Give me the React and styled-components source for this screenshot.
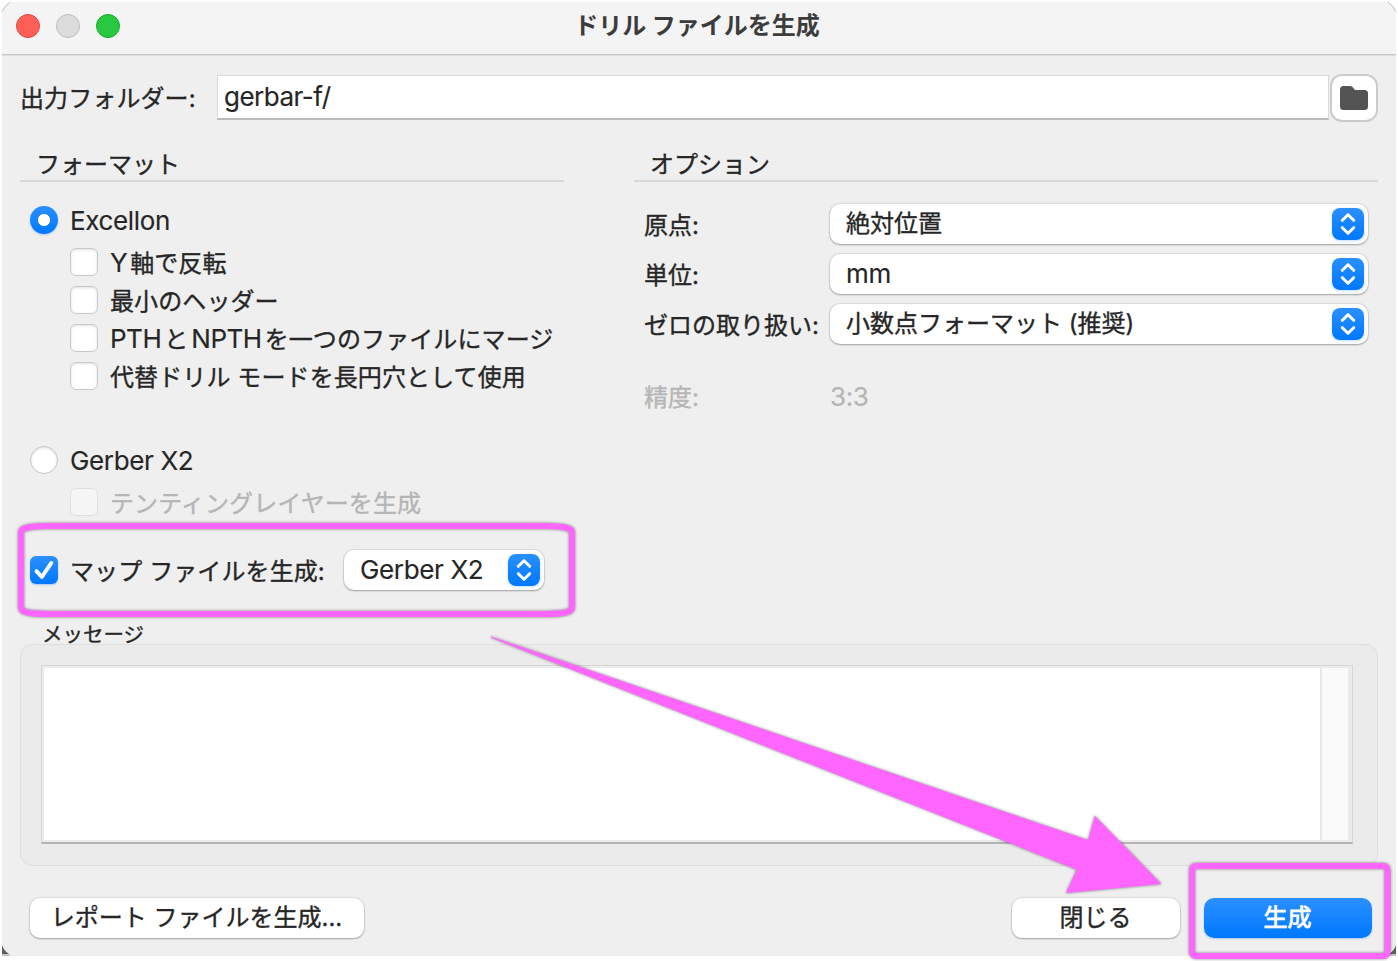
import React, { useState } from "react"
import styled, { createGlobalStyle, css } from "styled-components";

const GlobalStyle = createGlobalStyle`
*{
  box-sizing: border-box;
}
body{
  margin: 0;
  background: #fff;
  color: #262626;
  font-family: Inter, "Noto Sans CJK JP", sans-serif;
  font-size: 24px;
  -webkit-text-stroke: 0.35px;
}
button, input, textarea{
  font: inherit;
  color: inherit;
}
`;

const Latin = styled.span`
font-family: Inter, sans-serif;
font-size: 26px;
letter-spacing: -0.35px;
white-space: pre;
-webkit-text-stroke: 0.15px;
`;

// latin word set inside a japanese label
const Word = styled(Latin)`
letter-spacing: -0.5px;
margin: 0 3px;

&:first-child{
  margin-left: 0;
}
`;

const headerOptions = [
  { id: "mirror", label: <><Word>Y</Word>軸で反転</> },
  { id: "minimal", label: "最小のヘッダー" },
  { id: "merge", label: <><Word>PTH</Word>と<Word>NPTH</Word>を一つのファイルにマージ</> },
  { id: "oval", label: "代替ドリル モードを長円穴として使用" },
]

const Select = ({ width, latin, children }) => (
  <SelectBox $width={width}>
    {latin ? <Latin>{children}</Latin> : <span>{children}</span>}
    <Stepper>
      <svg width="32" height="32" viewBox="0 0 32 32" fill="none" stroke="#fff" strokeWidth="3" strokeLinecap="round" strokeLinejoin="round">
        <path d="M10.3 12.3 16 6.7l5.7 5.6M10.3 19.7l5.7 5.6 5.7-5.6" />
      </svg>
    </Stepper>
  </SelectBox>
)

const Check = ({ on, onClick }) => (
  <CheckBox $on={on} onClick={onClick}>
    {on && (
      <svg width="28" height="28" viewBox="0 0 28 28" fill="none" stroke="#fff" strokeWidth="4" strokeLinecap="round" strokeLinejoin="round">
        <path d="M6.5 15.2 11.8 21 21.3 7" />
      </svg>
    )}
  </CheckBox>
)

const WindowCorners = () => (
  <Overlay width="1398" height="961" viewBox="0 0 1398 961">
    <path fill="#fff" d="M2 2H11Q5 5 2 12ZM1396 2H1387Q1393 5 1396 12Z" />
    <path fill="none" stroke="#bdbdbd" d="M2 11.5Q5 5 10.5 2M1396 11.5Q1393 5 1387.5 2" />
    <path fill="#5e5e5e" d="M2 945Q4 951 9 954H2ZM1396 945Q1394 951 1389 954H1396Z" />
    <path fill="#c4c4c4" d="M2 954H9L11 956H2ZM1396 954H1389L1387 956H1396Z" />
  </Overlay>
)

const Annotations = () => (
  <Overlay $shadow width="1398" height="961" viewBox="0 0 1398 961">
    <g fill="none" stroke="#ff66ff" strokeWidth="6">
      <path d="M21 532Q21 526 48 526H545Q572 526 572 532V608Q572 614 545 614H48Q21 614 21 608Z" />
      <rect x="1192" y="866" width="195.5" height="90" rx="4" />
    </g>
    <path fill="#ff66ff" d="M491 636.5 1088 840 1094.7 815.7 1161.3 884 1066 893 1076.8 869.7 491 637.7Z" />
  </Overlay>
)

const App = () => {
  const [format, setFormat] = useState("excellon")
  const [checked, setChecked] = useState({ map: true })

  const toggle = (id) => setChecked({ ...checked, [id]: !checked[id] })

  return (
    <>
      <GlobalStyle />
      <Window>
        <TitleBar>
          <Light $color="#ff5f57" $edge="#e2463f" />
          <Light $color="#dcdcdc" $edge="#bcbcbc" />
          <Light $color="#28c840" $edge="#12ac28" />
          <Title>ドリル ファイルを生成</Title>
        </TitleBar>

        <FolderRow>
          <FolderLabel>出力フォルダー:</FolderLabel>
          <FolderInput defaultValue="gerbar-f/" />
          <FolderButton>
            <svg width="28" height="24" viewBox="0 0 28 24">
              <path fill="#545454" d="M0 3.5Q0 0 3.5 0H10Q11.5 0 12.5 1L15 4H24.5Q28 4 28 7.5V20.5Q28 24 24.5 24H3.5Q0 24 0 20.5Z" />
            </svg>
          </FolderButton>
        </FolderRow>

        <Columns>
          <FormatColumn>
            <SectionTitle>フォーマット</SectionTitle>
            <RadioRow onClick={() => setFormat("excellon")}>
              <Radio $on={format === "excellon"} />
              <Latin>Excellon</Latin>
            </RadioRow>
            {headerOptions.map((item) => (
              <CheckRow key={item.id} onClick={() => toggle(item.id)}>
                <Check on={checked[item.id]} />
                <p>{item.label}</p>
              </CheckRow>
            ))}
            <RadioRow $gap={42} onClick={() => setFormat("gerber")}>
              <Radio $on={format === "gerber"} />
              <Latin>Gerber X2</Latin>
            </RadioRow>
            <CheckRow $disabled>
              <Check />
              <p>テンティングレイヤーを生成</p>
            </CheckRow>
            <MapRow>
              <Check on={checked.map} onClick={() => toggle("map")} />
              <p>マップ ファイルを生成:</p>
              <Select width={200} latin>Gerber X2</Select>
            </MapRow>
          </FormatColumn>

          <OptionColumn>
            <SectionTitle>オプション</SectionTitle>
            <OptionGrid>
              <label>原点:</label>
              <Select>絶対位置</Select>
              <label>単位:</label>
              <Select latin>mm</Select>
              <label>ゼロの取り扱い:</label>
              <Select>小数点フォーマット (推奨)</Select>
            </OptionGrid>
            <PrecisionRow>
              <span>精度:</span>
              <Latin>3:3</Latin>
            </PrecisionRow>
          </OptionColumn>
        </Columns>

        <MessageLabel>メッセージ</MessageLabel>
        <MessageBox>
          <MessageArea>
            <MessageText />
            <ScrollTrack />
          </MessageArea>
        </MessageBox>

        <Footer>
          <Button $width={334}>レポート ファイルを生成...</Button>
          <FooterRight>
            <Button $width={168}>閉じる</Button>
            <Button $width={168} $primary>生成</Button>
          </FooterRight>
        </Footer>
      </Window>
      <WindowCorners />
      <Annotations />
    </>
  )
}

const blue = "linear-gradient(#2b90ff, #0078ff)"

const Window = styled.div`
width: 1394px;
height: 954px;
margin: 2px;
display: flex;
flex-direction: column;
background: #efefef;
overflow: hidden;

p{
  margin: 0;
}
`;

const TitleBar = styled.div`
flex: none;
height: 54px;
display: flex;
align-items: center;
gap: 16px;
padding: 0 14px 5px;
background: #f4f4f4;
border-bottom: 1px solid #dedede;
box-shadow: inset 0 -1px #c8c8c8;
`;

const Light = styled.span`
width: 24px;
height: 24px;
border-radius: 50%;
background: ${(props) => props.$color};
border: 1px solid ${(props) => props.$edge};
`;

const Title = styled.h1`
flex: 1;
margin: 0 124px 1px 0;
font-size: 24px;
line-height: 36px;
font-weight: 700;
text-align: center;
color: #3c3c3c;
-webkit-text-stroke: 0;
`;

const FolderRow = styled.div`
flex: none;
display: flex;
align-items: center;
height: 48px;
margin-top: 18px;
padding: 0 18px;
`;

const FolderLabel = styled.label`
width: 197px;
padding-bottom: 3px;
letter-spacing: 0.1px;
`;

const FolderInput = styled.input`
flex: 1;
height: 45px;
margin: 0 1px 2px 0;
padding: 0 6px;
background: #fff;
border: 1px solid #dadada;
border-bottom: 2px solid #b9b9b9;
border-radius: 0;
outline: none;
font-family: Inter, sans-serif;
font-size: 26px;
letter-spacing: -0.5px;
-webkit-text-stroke: 0.15px;
`;

const FolderButton = styled.button`
display: flex;
align-items: center;
justify-content: center;
width: 48px;
height: 48px;
padding: 0;
background: #fff;
border: 2px solid #cbcbcb;
border-radius: 12px;
`;

const Columns = styled.div`
flex: none;
display: flex;
justify-content: space-between;
padding: 0 18px;
`;

const FormatColumn = styled.section`
width: 544px;
`;

const OptionColumn = styled.section`
width: 744px;
`;

const SectionTitle = styled.h2`
height: 60px;
margin: 0;
padding: 25px 16px 0;
border-bottom: 2px solid #d8d8d8;
font-size: 24px;
line-height: 36px;
font-weight: 400;
`;

const RadioRow = styled.div`
display: flex;
align-items: center;
gap: 12px;
height: 46px;
margin-top: ${(props) => props.$gap || 15}px;
padding-left: 10px;
`;

const Radio = styled.span`
width: 28px;
height: 28px;
border-radius: 50%;
background: #fff;
border: 1px solid #c6c6c6;
box-shadow: inset 0 1px 3px rgba(0, 0, 0, 0.12);
${(props) => props.$on && css`
  background: radial-gradient(circle, #fff 5.7px, transparent 6.3px), ${blue};
  border: none;
  box-shadow: 0 1px 2px rgba(0, 110, 255, 0.3);
`}
`;

const CheckRow = styled.div`
display: flex;
align-items: center;
gap: 12px;
height: 38px;
padding-left: 50px;
white-space: nowrap;

p{
  margin-bottom: 2px;
  letter-spacing: 0.1px;
}
${(props) => props.$disabled && css`
  color: #b5b5b5;
  & > span{
    background: #f5f5f5;
    border-color: #dedede;
    box-shadow: none;
  }
`}
`;

const CheckBox = styled.span`
flex: none;
display: block;
width: 28px;
height: 28px;
border-radius: 6px;
background: #fff;
border: 1px solid #c9c9c9;
box-shadow: inset 0 1px 3px rgba(0, 0, 0, 0.12);
${(props) => props.$on && css`
  background: ${blue};
  border: none;
  box-shadow: 0 1px 2px rgba(0, 110, 255, 0.3);
`}

svg{
  display: block;
}
`;

const MapRow = styled.div`
display: flex;
align-items: center;
height: 40px;
margin-top: 29px;
padding-left: 10px;

p{
  width: 286px;
  padding: 0 0 2px 12px;
  letter-spacing: 0.1px;
}
`;

const SelectBox = styled.div`
display: flex;
align-items: center;
justify-content: space-between;
width: ${(props) => (props.$width ? `${props.$width}px` : "100%")};
height: 40px;
padding: 0 4px 0 16px;
background: #fff;
border-radius: 10px;
box-shadow: 0 0 1px 1px rgba(0, 0, 0, 0.08), 0 1px 2px rgba(0, 0, 0, 0.28);

& > span:first-child{
  line-height: 36px;
}
& > ${Latin}{
  margin-bottom: 1px;
}
`;

const Stepper = styled.span`
width: 32px;
height: 32px;
border-radius: 8px;
background: ${blue};
box-shadow: 0 1px 3px rgba(0, 110, 255, 0.25);

svg{
  display: block;
}
`;

const OptionGrid = styled.div`
display: grid;
grid-template-columns: 186px 538px;
grid-auto-rows: 40px;
align-items: center;
row-gap: 10px;
margin-top: 22px;
padding-left: 10px;

label{
  padding-bottom: 2px;
  white-space: nowrap;
}
`;

const PrecisionRow = styled.div`
display: flex;
align-items: center;
height: 40px;
margin-top: 32px;
padding-left: 10px;
color: #b5b5b5;

& > span:first-child{
  width: 186px;
  padding-bottom: 2px;
}
`;

const MessageLabel = styled.p`
flex: none;
height: 54px;
&&{
  padding: 31px 0 0 40px;
}
font-size: 20.5px;
line-height: 28px;
`;

const MessageBox = styled.div`
flex: none;
height: 222px;
margin: 0 18px;
padding: 20px 24px 21px 20px;
background: #ebebeb;
border: 1px solid #dfdfdf;
border-radius: 12px;
`;

const MessageArea = styled.div`
display: flex;
height: 179px;
padding: 2px 4px 2px 2px;
background: #ebebeb;
border: 1px solid #d6d6d6;
border-bottom: 2px solid #b5b5b5;
`;

const MessageText = styled.div`
flex: 1;
background: #fff;
`;

const ScrollTrack = styled.div`
width: 28px;
background: #fafafa;
border-left: 2px solid #e8e8e8;
`;

const Footer = styled.div`
flex: none;
display: flex;
justify-content: space-between;
margin-top: 32px;
padding: 0 24px 0 28px;
`;

const FooterRight = styled.div`
display: flex;
gap: 24px;
`;

const Button = styled.button`
width: ${(props) => props.$width}px;
height: 40px;
padding: 0 1px 0 0;
line-height: 36px;
background: #fff;
border: none;
border-radius: 10px;
box-shadow: 0 0 1px 1px rgba(0, 0, 0, 0.08), 0 1px 2px rgba(0, 0, 0, 0.28);
white-space: nowrap;
${(props) => props.$primary && css`
  background: ${blue};
  color: #fff;
  -webkit-text-stroke: 0.8px;
  box-shadow: 0 1px 2px rgba(0, 110, 255, 0.3);
`}
`;

// sits over the dialog: window corners, highlight frames and arrow
const Overlay = styled.svg`
position: absolute;
top: 0;
left: 0;
pointer-events: none;
${(props) => props.$shadow && css`
  filter: drop-shadow(0 0 1.5px rgba(0, 0, 0, 0.5));
`}
`;

export default App
